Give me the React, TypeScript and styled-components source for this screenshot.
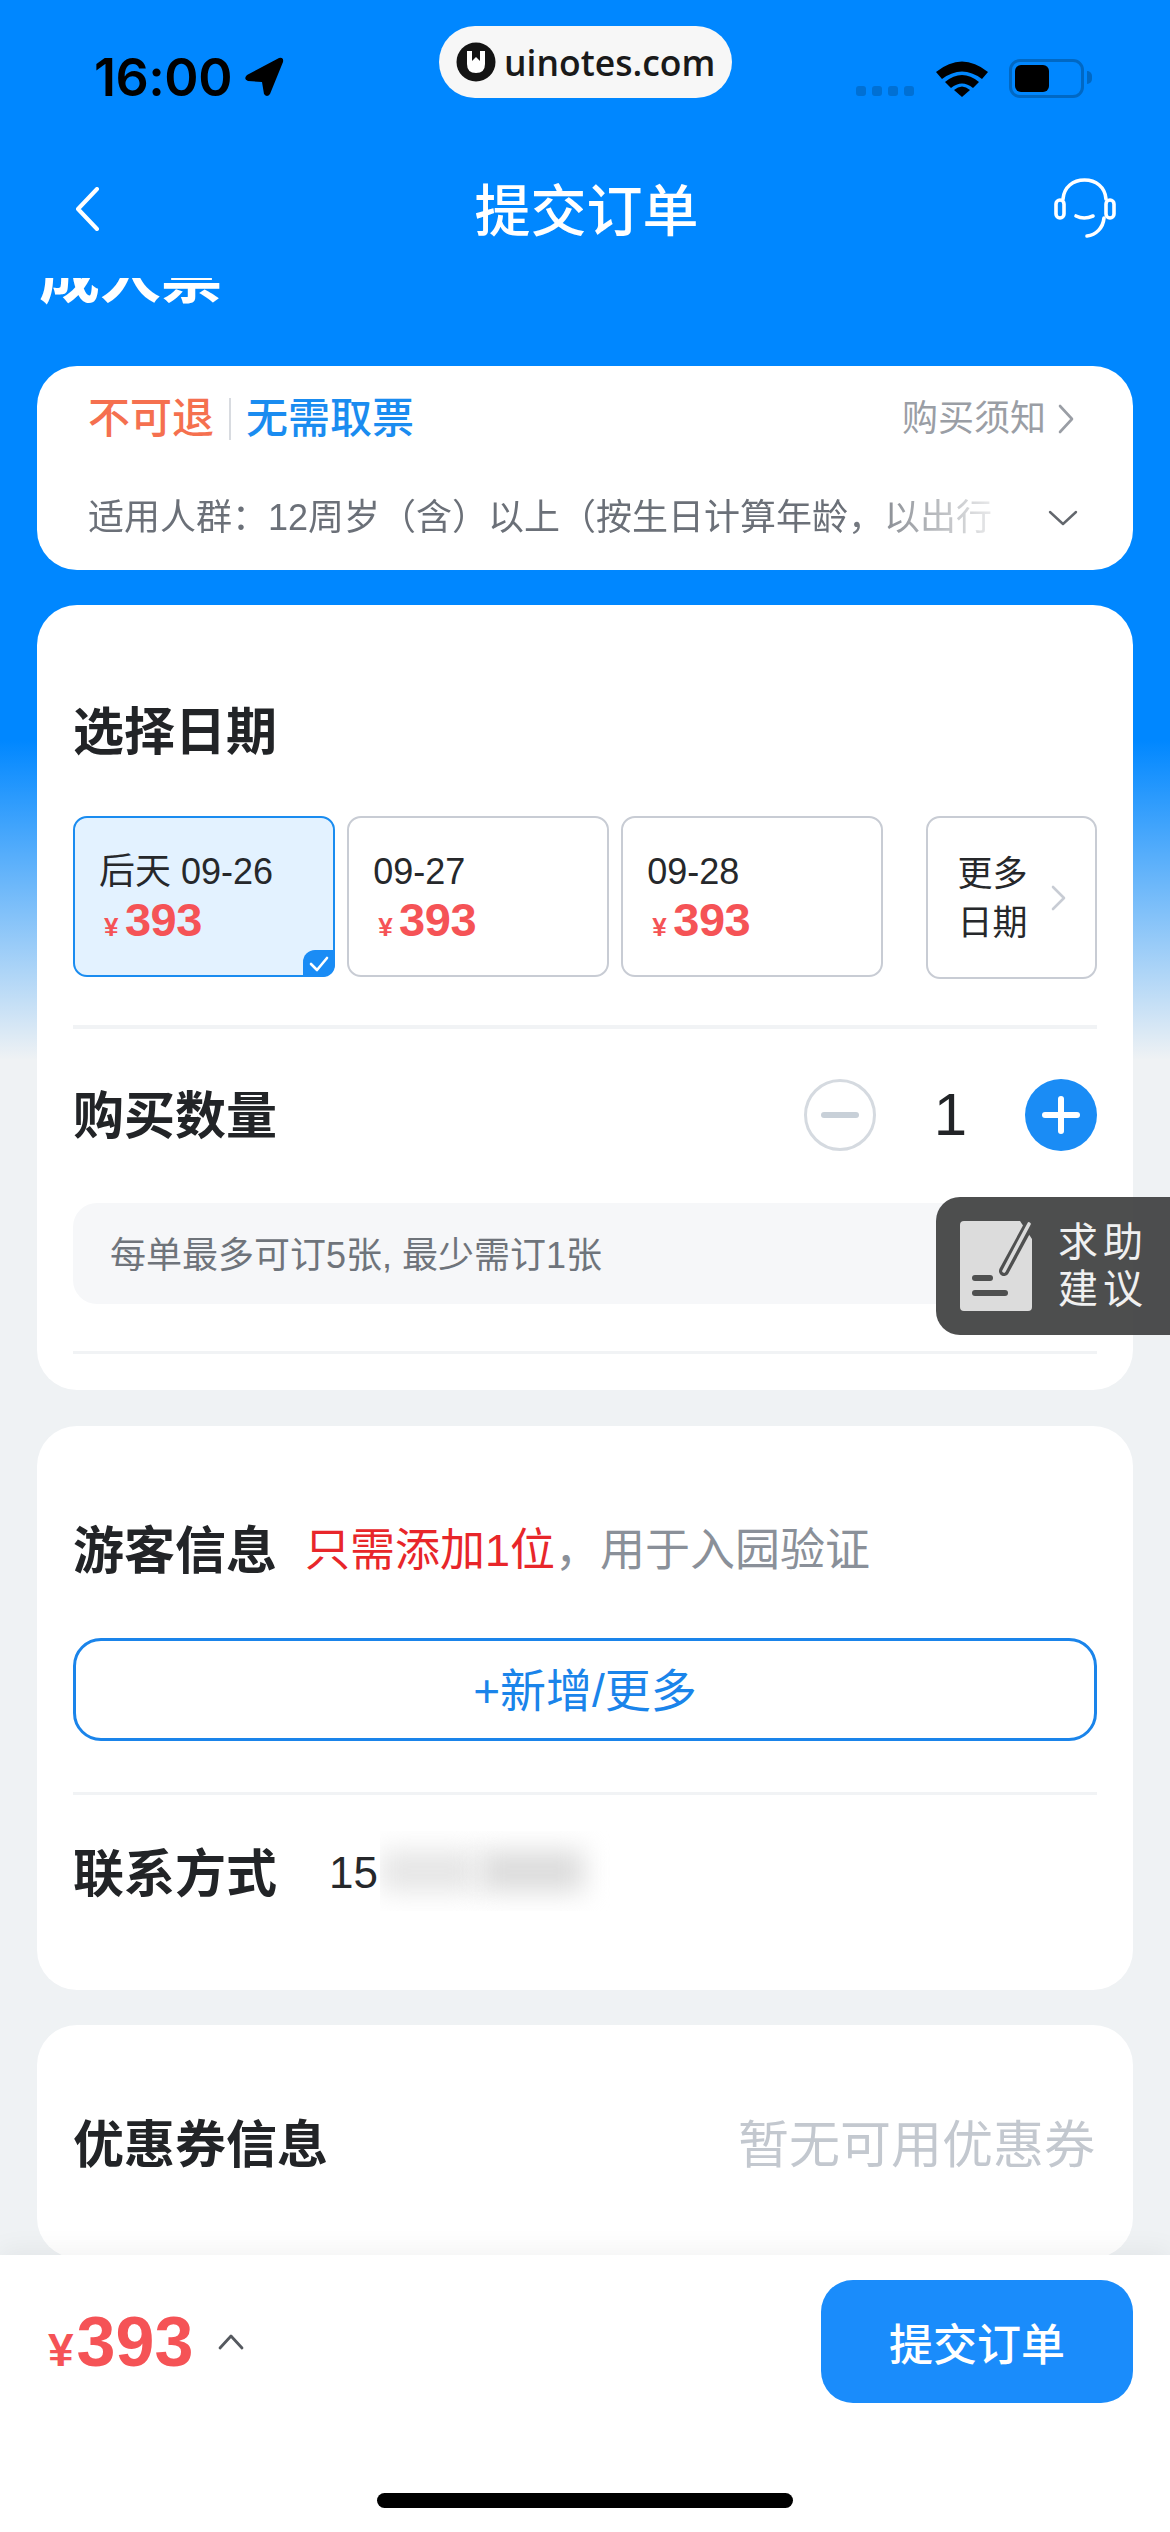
import { createGlobalStyle, styled } from 'styled-components'

const GlobalStyle = createGlobalStyle`
  * {
    box-sizing: border-box;
  }

  html, body {
    margin: 0;
    padding: 0;
    background: #eff2f4;
    font-family: "Liberation Sans", "Noto Sans CJK SC", sans-serif;
  }
`

const dates = [
  { label: '后天 09-26', price: 393, selected: true },
  { label: '09-27', price: 393, selected: false },
  { label: '09-28', price: 393, selected: false },
]

export default function App() {
  return (
    <Screen>
      <GlobalStyle />

      <StatusBar>
        <Clock>
          16:00
          <svg width="40" height="40" viewBox="0 0 40 40">
            <path
              d="M35 1 L3 18 Q-1 22 4 24 L18 25 L20 37 Q23 41 26 37 L39 5 Q40 0 35 1 Z"
              fill="#000"
            />
          </svg>
        </Clock>
        <StatusIcons>
          <SignalDots>
            <i /><i /><i /><i />
          </SignalDots>
          <svg width="52" height="38" viewBox="0 0 52 38">
            <path d="M0 13 Q26 -8 52 13 L46 20 Q26 5 6 20 Z" fill="#000" />
            <path d="M9 23 Q26 9 43 23 L37 29 Q26 20 15 29 Z" fill="#000" />
            <path d="M18 31 Q26 24 34 31 L26 38 Z" fill="#000" />
          </svg>
          <Battery>
            <BatteryLevel />
          </Battery>
        </StatusIcons>
      </StatusBar>

      <Watermark>
        <svg width="40" height="40" viewBox="0 0 40 40">
          <circle cx="20" cy="20" r="19.5" fill="#141414" />
          <path
            d="M11 9 L16 9 L16 19 L20 15 L24 19 L24 9 L29 9 L29 22 Q29 31 20 31 Q11 31 11 22 Z"
            fill="#fff"
          />
        </svg>
        <span>uinotes.com</span>
      </Watermark>

      <NavBar>
        <BackButton>
          <svg width="24" height="44" viewBox="0 0 24 44">
            <path d="M22 2 L3 22 L22 42" fill="none" stroke="#fff" strokeWidth="4" strokeLinecap="round" strokeLinejoin="round" />
          </svg>
        </BackButton>
        <NavTitle>提交订单</NavTitle>
        <SupportButton>
          <svg width="62" height="62" viewBox="0 0 62 62" fill="none" stroke="#fff" strokeWidth="3.6" strokeLinecap="round">
            <rect x="2" y="22" width="8" height="18" rx="4" />
            <rect x="52" y="22" width="8" height="18" rx="4" />
            <path d="M9 21 C10 9 19 2 30.5 2 C42 2 51 9 52 21" />
            <path d="M50 40 C49 50 42 57 33 58" />
            <path d="M22 38 Q30 42 39 38" />
          </svg>
        </SupportButton>
      </NavBar>

      <ScrollArea>
        <TicketName>成人票</TicketName>

        <NoticeCard>
          <NoticeTop>
            <TagList>
              <Tag $color="#f5704f">不可退</Tag>
              <TagDivider />
              <Tag $color="#1a8cf0">无需取票</Tag>
            </TagList>
            <NoticeLink>
              购买须知
              <svg width="16" height="30" viewBox="0 0 16 30">
                <path d="M2 2 L14 15 L2 28" fill="none" stroke="#9a9ea5" strokeWidth="2.6" strokeLinecap="round" strokeLinejoin="round" />
              </svg>
            </NoticeLink>
          </NoticeTop>
          <NoticeBottom>
            <AudienceText>适用人群：12周岁（含）以上（按生日计算年龄，以出行</AudienceText>
            <svg width="30" height="16" viewBox="0 0 30 16">
              <path d="M2 2 L15 14 L28 2" fill="none" stroke="#63676d" strokeWidth="2.4" strokeLinecap="round" strokeLinejoin="round" />
            </svg>
          </NoticeBottom>
        </NoticeCard>

        <OrderCard>
          <SectionTitle>选择日期</SectionTitle>
          <DateRow>
            {dates.map((d) => (
              <DateCard key={d.label} $selected={d.selected}>
                <DateLabel>{d.label}</DateLabel>
                <DatePrice>
                  <small>¥</small>
                  {d.price}
                </DatePrice>
                {d.selected && (
                  <CheckBadge>
                    <svg width="20" height="18" viewBox="0 0 20 18">
                      <path d="M2 9 L8 15 L18 3" fill="none" stroke="#fff" strokeWidth="2.6" strokeLinecap="round" strokeLinejoin="round" />
                    </svg>
                  </CheckBadge>
                )}
              </DateCard>
            ))}
            <MoreDates>
              <span>更多<br />日期</span>
              <svg width="16" height="26" viewBox="0 0 16 26">
                <path d="M2 2 L13 13 L2 24" fill="none" stroke="#c8ccd4" strokeWidth="2.6" strokeLinecap="round" strokeLinejoin="round" />
              </svg>
            </MoreDates>
          </DateRow>

          <Divider $top={46} $height={4} />

          <QuantityRow>
            <SectionTitle>购买数量</SectionTitle>
            <Stepper>
              <MinusButton />
              <Count>1</Count>
              <PlusButton />
            </Stepper>
          </QuantityRow>

          <LimitHint>每单最多可订5张, 最少需订1张</LimitHint>

          <Divider $top={47} $height={3} />
        </OrderCard>

        <VisitorCard>
          <VisitorHeading>
            <SectionTitle>游客信息</SectionTitle>
            <VisitorHint>
              <em>只需添加1位</em>，用于入园验证
            </VisitorHint>
          </VisitorHeading>
          <AddButton>+新增/更多</AddButton>
          <Divider $top={51} $height={3} />
          <ContactRow>
            <SectionTitle>联系方式</SectionTitle>
            <PhonePrefix>15</PhonePrefix>
            <PhoneMask>
              <MaskBlob $width={95} $shade="#e6e6e6" />
              <MaskBlob $width={105} $shade="#dcdcdc" />
            </PhoneMask>
          </ContactRow>
        </VisitorCard>

        <CouponCard>
          <SectionTitle>优惠券信息</SectionTitle>
          <CouponEmpty>暂无可用优惠券</CouponEmpty>
        </CouponCard>
      </ScrollArea>

      <Footer>
        <FooterRow>
          <TotalPrice>
            <small>¥</small>393
            <svg width="26" height="16" viewBox="0 0 26 16">
              <path d="M2 14 L13 2 L24 14" fill="none" stroke="#55595f" strokeWidth="2.8" strokeLinecap="round" strokeLinejoin="round" />
            </svg>
          </TotalPrice>
          <SubmitButton>提交订单</SubmitButton>
        </FooterRow>
        <HomeIndicator />
      </Footer>

      <HelpFloat>
        <svg width="72" height="90" viewBox="0 0 72 90">
          <path d="M4 0 H60 L72 18 V86 Q72 90 68 90 H4 Q0 90 0 86 V4 Q0 0 4 0 Z" fill="#dcdcdc" />
          <path d="M70 2 L44 50" stroke="#4f5050" strokeWidth="10" strokeLinecap="round" />
          <path d="M69 3 L44 50" stroke="#dcdcdc" strokeWidth="3.6" strokeLinecap="round" />
          <rect x="12" y="54" width="21" height="6" rx="3" fill="#4f5050" />
          <rect x="12" y="69" width="36" height="6" rx="3" fill="#4f5050" />
        </svg>
        <HelpText>求助<br />建议</HelpText>
      </HelpFloat>
    </Screen>
  )
}

const Screen = styled.div`
  width: 1170px;
  height: 2532px;
  position: relative;
  overflow: hidden;
  display: flex;
  flex-direction: column;
  background: linear-gradient(180deg, #0087ff 0, #0087ff 740px, #eff2f4 1060px);
`

const StatusBar = styled.div`
  height: 140px;
  flex-shrink: 0;
  padding: 56px 86px 0 94px;
  display: flex;
  justify-content: space-between;
  align-items: flex-start;
`

const Clock = styled.div`
  display: flex;
  align-items: center;
  gap: 12px;
  height: 42px;
  font-family: Inter, sans-serif;
  font-size: 52px;
  font-weight: 600;
  letter-spacing: -0.5px;
  color: #000;
`

const StatusIcons = styled.div`
  display: flex;
  align-items: flex-start;
  gap: 22px;
  padding-top: 3px;
`

const SignalDots = styled.div`
  display: flex;
  gap: 6px;
  margin-top: 27px;

  i {
    width: 10px;
    height: 10px;
    border-radius: 3px;
    background: #0070d4;
  }
`

const Battery = styled.div`
  width: 75px;
  height: 39px;
  padding: 3px;
  border: 3px solid #0068c4;
  border-radius: 11px;
  position: relative;
  margin-left: -1px;

  &::after {
    content: '';
    position: absolute;
    right: -11px;
    top: 9px;
    width: 5px;
    height: 13px;
    border-radius: 0 6px 6px 0;
    background: #0068c4;
  }
`

const BatteryLevel = styled.div`
  width: 34px;
  height: 100%;
  border-radius: 6px;
  background: #000;
`

const Watermark = styled.div`
  position: absolute;
  left: 439px;
  top: 26px;
  width: 293px;
  height: 72px;
  padding-left: 17px;
  display: flex;
  align-items: center;
  gap: 8px;
  border-radius: 36px;
  background: #f7f7f7;
  font-family: "Open Sans", sans-serif;
  font-size: 35.5px;
  font-weight: 600;
  color: #1a1a1a;
`

const NavBar = styled.div`
  height: 138px;
  flex-shrink: 0;
  display: flex;
  align-items: center;
  justify-content: space-between;
  padding: 0 54px 0 75px;
`

const BackButton = styled.div`
  width: 44px;
  display: flex;
`

const SupportButton = styled.div`
  width: 62px;
  display: flex;
`

const NavTitle = styled.div`
  padding-top: 5px;
  font-size: 56px;
  line-height: 70px;
  font-weight: 500;
  color: #fff;
`

const ScrollArea = styled.div`
  flex: 1;
  min-height: 0;
  overflow: hidden;
  padding: 0 37px;
`

const TicketName = styled.div`
  margin: -31px 0 59px 2px;
  font-size: 61px;
  line-height: 60px;
  font-weight: 700;
  color: #fff;
`

const Card = styled.div`
  background: #fff;
  border-radius: 40px;
`

const NoticeCard = styled(Card)`
  height: 204px;
  padding: 23px 51px 0;
`

const NoticeTop = styled.div`
  height: 60px;
  display: flex;
  align-items: center;
  justify-content: space-between;
`

const TagList = styled.div`
  display: flex;
  align-items: center;
`

const Tag = styled.span<{ $color: string }>`
  font-size: 42px;
  line-height: 60px;
  font-weight: 500;
  color: ${(p) => p.$color};
`

const TagDivider = styled.div`
  width: 2px;
  height: 42px;
  margin: 0 15px;
  background: #d8dbe0;
`

const NoticeLink = styled.div`
  display: flex;
  align-items: center;
  gap: 12px;
  margin-right: 8px;
  font-size: 36px;
  line-height: 60px;
  color: #9a9ea5;
`

const NoticeBottom = styled.div`
  height: 50px;
  margin-top: 44px;
  display: flex;
  align-items: center;
  justify-content: space-between;
  padding-right: 4px;
`

const AudienceText = styled.div`
  width: 904px;
  font-size: 36px;
  line-height: 50px;
  white-space: nowrap;
  color: #6b7078;
  mask-image: linear-gradient(90deg, #000 84%, rgba(0, 0, 0, 0.15) 100%);
`

const OrderCard = styled(Card)`
  margin-top: 35px;
  padding: 96px 36px 36px;
`

const SectionTitle = styled.div`
  height: 60px;
  font-size: 51px;
  line-height: 63px;
  font-weight: 700;
  color: #222427;
  white-space: nowrap;
`

const DateRow = styled.div`
  margin-top: 55px;
  display: flex;
  gap: 12px;
`

const DateCard = styled.div<{ $selected: boolean }>`
  width: 263px;
  height: 161px;
  padding: 32px 0 0 24px;
  position: relative;
  border: 2px solid ${(p) => (p.$selected ? '#1a8cf0' : '#c8ccd4')};
  border-radius: 14px;
  background: ${(p) => (p.$selected ? '#e3f2ff' : '#fff')};
`

const DateLabel = styled.div`
  font-size: 36px;
  line-height: 44px;
  color: #26282b;
  white-space: nowrap;
`

const DatePrice = styled.div`
  margin-top: 1px;
  padding-left: 5px;
  font-size: 47px;
  line-height: 50px;
  font-weight: 700;
  letter-spacing: -0.5px;
  color: #f55356;

  small {
    margin-right: 7px;
    font-size: 26px;
    font-weight: 700;
  }
`

const CheckBadge = styled.div`
  position: absolute;
  right: -2px;
  bottom: -2px;
  width: 32px;
  height: 27px;
  display: flex;
  align-items: center;
  justify-content: center;
  border-radius: 12px 0 12px 0;
  background: #1a8cf5;
`

const MoreDates = styled.div`
  width: 171px;
  height: 163px;
  margin-left: 31px;
  padding: 0 28px 0 29px;
  display: flex;
  align-items: center;
  justify-content: space-between;
  border: 2px solid #c8ccd4;
  border-radius: 14px;
  font-size: 35px;
  line-height: 49px;
  color: #26282b;
`

const Divider = styled.div<{ $top: number; $height: number }>`
  height: ${(p) => p.$height}px;
  margin-top: ${(p) => p.$top}px;
  background: #f1f3f5;
`

const QuantityRow = styled.div`
  margin-top: 50px;
  height: 72px;
  display: flex;
  align-items: center;
  justify-content: space-between;
`

const Stepper = styled.div`
  display: flex;
  align-items: center;
`

const RoundButton = styled.div`
  width: 72px;
  height: 72px;
  border-radius: 50%;
  position: relative;

  &::before {
    content: '';
    position: absolute;
    left: 17px;
    top: 33px;
    width: 38px;
    height: 6px;
    border-radius: 3px;
  }
`

const MinusButton = styled(RoundButton)`
  border: 3px solid #d5dae0;

  &::before {
    left: 14px;
    top: 30px;
    background: #c8d0d8;
  }
`

const PlusButton = styled(RoundButton)`
  background: #1a8cf5;

  &::before {
    background: #fff;
  }

  &::after {
    content: '';
    position: absolute;
    left: 33px;
    top: 17px;
    width: 6px;
    height: 38px;
    border-radius: 3px;
    background: #fff;
  }
`

const Count = styled.div`
  width: 149px;
  text-align: center;
  font-size: 60px;
  line-height: 72px;
  color: #222427;
`

const LimitHint = styled.div`
  margin-top: 52px;
  height: 101px;
  padding: 0 0 4px 37px;
  display: flex;
  align-items: center;
  border-radius: 24px;
  background: #f6f7f9;
  font-size: 36px;
  color: #6f747b;
`

const VisitorCard = styled(Card)`
  margin-top: 36px;
  padding: 94px 36px 87px;
`

const VisitorHeading = styled.div`
  display: flex;
  align-items: center;
  gap: 28px;
`

const VisitorHint = styled.div`
  font-size: 45px;
  line-height: 62px;
  height: 60px;
  color: #8a9099;
  white-space: nowrap;

  em {
    font-style: normal;
    color: #e8262a;
  }
`

const AddButton = styled.div`
  margin-top: 58px;
  height: 103px;
  padding-bottom: 5px;
  display: flex;
  align-items: center;
  justify-content: center;
  border: 3px solid #1a84ea;
  border-radius: 28px;
  font-size: 46px;
  color: #1a84ea;
`

const ContactRow = styled.div`
  margin-top: 48px;
  height: 60px;
  display: flex;
  align-items: center;
`

const PhonePrefix = styled.div`
  margin-left: 52px;
  font-size: 44px;
  color: #26282b;
`

const PhoneMask = styled.div`
  width: 243px;
  height: 80px;
  margin: -4px 0 0 2px;
  flex-shrink: 0;
  overflow: hidden;
  display: flex;
  align-items: center;
  gap: 4px;
  background: #fff;
`

const MaskBlob = styled.div<{ $width: number; $shade: string }>`
  width: ${(p) => p.$width}px;
  height: 42px;
  background: ${(p) => p.$shade};
  filter: blur(13px);
`

const CouponCard = styled(Card)`
  margin-top: 35px;
  height: 233px;
  padding: 89px 38px 0 36px;
  display: flex;
  align-items: flex-start;
  justify-content: space-between;
`

const CouponEmpty = styled.div`
  font-size: 51px;
  line-height: 63px;
  color: #c3c8cf;
`

const Footer = styled.div`
  height: 277px;
  flex-shrink: 0;
  position: relative;
  padding: 25px 37px 0 48px;
  display: flex;
  flex-direction: column;
  background: #fff;
  box-shadow: 0 -6px 24px rgba(0, 0, 0, 0.05);
`

const FooterRow = styled.div`
  height: 123px;
  display: flex;
  align-items: center;
  justify-content: space-between;
`

const TotalPrice = styled.div`
  display: flex;
  align-items: baseline;
  font-size: 70px;
  font-weight: 700;
  color: #f55356;

  small {
    margin-right: 3px;
    font-size: 46px;
    font-weight: 700;
  }

  svg {
    margin-left: 25px;
    align-self: center;
  }
`

const SubmitButton = styled.div`
  width: 312px;
  height: 123px;
  display: flex;
  align-items: center;
  justify-content: center;
  border-radius: 32px;
  background: #1a8cfb;
  font-size: 44px;
  font-weight: 500;
  color: #fff;
`

const HomeIndicator = styled.div`
  width: 416px;
  height: 15px;
  margin: 90px 0 0 329px;
  border-radius: 8px;
  background: #000;
`

const HelpFloat = styled.div`
  position: absolute;
  right: 0;
  top: 1197px;
  width: 234px;
  height: 138px;
  padding-left: 24px;
  display: flex;
  align-items: center;
  gap: 26px;
  border-radius: 24px 0 0 24px;
  background: rgba(62, 63, 63, 0.92);
`

const HelpText = styled.div`
  font-size: 40px;
  line-height: 47px;
  letter-spacing: 5px;
  color: #f0f0f0;
`
